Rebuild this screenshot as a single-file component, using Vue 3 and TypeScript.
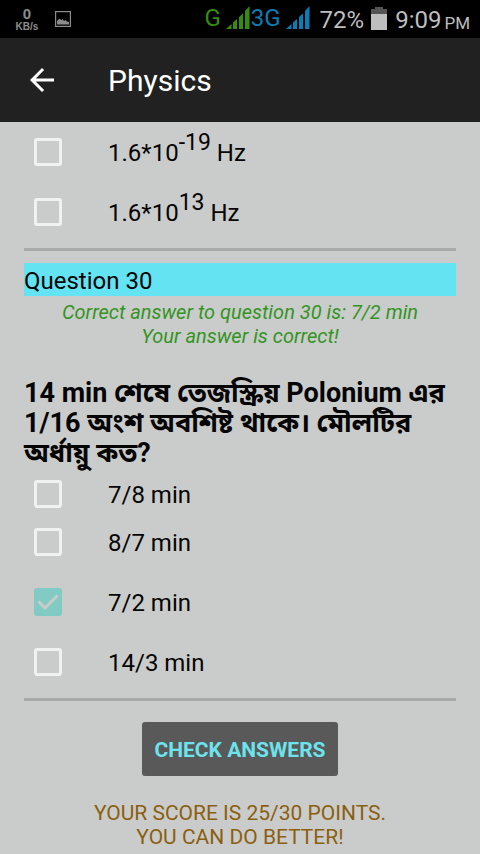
<script setup lang="ts">
import { ref } from 'vue'

interface Option {
  id: string
  text: string
  power?: string
  unit?: string
  checked: boolean
  tight?: boolean
}

const previousOptions = ref<Option[]>([
  { id: 'q29-c', text: '1.6*10', power: '-19', unit: ' Hz', checked: false },
  { id: 'q29-d', text: '1.6*10', power: '13', unit: ' Hz', checked: false },
])

const options = ref<Option[]>([
  { id: 'q30-a', text: '7/8 min', checked: false, tight: true },
  { id: 'q30-b', text: '8/7 min', checked: false },
  { id: 'q30-c', text: '7/2 min', checked: true },
  { id: 'q30-d', text: '14/3 min', checked: false },
])
</script>

<template>
  <div class="screen">
    <div class="status">
      <div class="speed"><span class="speed-value">0</span><span class="speed-unit">KB/s</span></div>
      <svg class="picture" width="16" height="16" viewBox="0 0 16 16">
        <rect x="0.6" y="0.6" width="14.8" height="14.8" fill="none" stroke="#8c8c8c" stroke-width="1.2" />
        <path d="M2 13.5V10l1.500-1.500 1-1 1 1 1 .500 1-1 1.500 2 1.500-1 1.500 1.500 2 .500v2.500z" fill="#8c8c8c" />
      </svg>
      <div class="system">
        <span class="net green">G</span>
        <svg class="bars green" width="24" height="23" viewBox="0 0 24 23" fill="currentColor">
          <path d="M0 23L5.500 18V23zM7 16.500l4-3.500V23H7zM13 11l4-3.500V23h-4zM19 5l4.500-5V23H19z" />
        </svg>
        <span class="net blue">3G</span>
        <svg class="bars blue" width="24" height="23" viewBox="0 0 24 23" fill="currentColor">
          <path d="M0 23L5.500 18V23zM7 16.500l4-3.500V23H7zM13 11l4-3.500V23h-4zM19 5l4.500-5V23H19z" />
        </svg>
        <span class="percent">72%</span>
        <svg class="battery" width="16" height="23" viewBox="0 0 16 23">
          <path d="M4 0h8v2h4v6H0V2h4z" fill="#555" />
          <path d="M0 7h16v16H0z" fill="#bebebe" />
        </svg>
        <span class="time">9:09</span>
        <span class="period">PM</span>
      </div>
    </div>

    <header class="bar">
      <button class="back" type="button" aria-label="Back">
        <svg width="36" height="36" viewBox="0 0 24 24" fill="#fff">
          <path d="M20 11H7.830l5.590-5.590L12 4l-8 8 8 8 1.410-1.410L7.830 13H20v-2z" />
        </svg>
      </button>
      <h1 class="title">Physics</h1>
    </header>

    <main class="content">
      <div class="options">
        <label v-for="o in previousOptions" :key="o.id" class="option" :for="o.id">
          <span class="check">
            <input :id="o.id" v-model="o.checked" type="checkbox" class="box" />
            <svg v-if="o.checked" class="tick" viewBox="0 0 28 28"><path d="M4.500 13.500l6.500 6.500L23.500 7.500" /></svg>
          </span>
          <span class="text">{{ o.text }}<sup>{{ o.power }}</sup>{{ o.unit }}</span>
        </label>
      </div>
      <hr class="rule" />

      <h2 class="heading">Question 30</h2>
      <p class="feedback">Correct answer to question 30 is: 7/2 min<br />Your answer is correct!</p>
      <p class="question">14 min শেষে তেজস্ক্রিয় Polonium এর 1/16 অংশ অবশিষ্ট থাকে। মৌলটির অর্ধায়ু কত?</p>

      <div class="answers">
        <label v-for="o in options" :key="o.id" class="option" :class="{ tight: o.tight }" :for="o.id">
          <span class="check">
            <input :id="o.id" v-model="o.checked" type="checkbox" class="box" />
            <svg v-if="o.checked" class="tick" viewBox="0 0 28 28"><path d="M4.500 13.500l6.500 6.500L23.500 7.500" /></svg>
          </span>
          <span class="text">{{ o.text }}</span>
        </label>
      </div>
      <hr class="rule" />

      <button class="submit" type="button">CHECK ANSWERS</button>
      <p class="score">YOUR SCORE IS 25/30 POINTS.<br />YOU CAN DO BETTER!</p>
    </main>
  </div>
</template>

<style>
body {
  background: #cacccb;
}
</style>

<style scoped>
.screen {
  font-family: Roboto, "Noto Sans", "Noto Sans Bengali", sans-serif;
  color: #050505;
  min-height: 100vh;
  background: #cacccb;
}
.status {
  display: flex;
  align-items: center;
  height: 38px;
  padding: 0 10px 0 15px;
  background: #000;
  color: #bebebe;
  white-space: nowrap;
}
.speed {
  display: flex;
  flex-direction: column;
  align-items: center;
  width: 24px;
  color: #8c8c8c;
  font-family: "Liberation Sans", sans-serif;
  font-weight: 700;
}
.speed-value {
  font-size: 15px;
  line-height: 15px;
}
.speed-unit {
  font-size: 10px;
  line-height: 12px;
}
.picture {
  margin-left: 16px;
}
.system {
  display: flex;
  align-items: center;
  margin-left: auto;
}
.net {
  padding-bottom: 2px;
  font-size: 24px;
  line-height: 34px;
}
.green {
  color: #368c0c;
}
.blue {
  color: #0c7cb4;
}
.bars {
  margin: 0 1px 3px 5px;
}
.percent,
.time {
  padding-top: 2px;
  font-size: 24px;
}
.percent {
  margin-left: 9px;
}
.battery {
  margin: 0 8px 2px 7px;
}
.period {
  margin: 7px 0 0 3px;
  font-size: 17px;
}
.bar {
  display: flex;
  align-items: center;
  height: 84px;
  padding: 0 24px;
  background: #212121;
}
.back {
  display: flex;
  width: 36px;
  padding: 0;
  border: 0;
  background: none;
}
.title {
  margin: 0 0 0 48px;
  color: #fff;
  font-size: 30px;
  font-weight: 400;
}
.content {
  padding: 6px 24px 5px;
}
.options,
.answers {
  display: flex;
  flex-direction: column;
}
.answers {
  margin-top: 2px;
}
.option {
  display: flex;
  align-items: center;
  height: 48px;
  margin-bottom: 12px;
  font-size: 24px;
}
.option.tight {
  margin-bottom: 0;
}
.check {
  display: grid;
  width: 28px;
  height: 28px;
  margin: 0 46px 0 10px;
}
.box {
  grid-area: 1 / 1;
  width: 28px;
  height: 28px;
  margin: 0;
  appearance: none;
  border: 3px solid #f0f2f1;
  border-radius: 3px;
}
.box:checked {
  border: 0;
  background: #82cbc4;
}
.tick {
  grid-area: 1 / 1;
  fill: none;
  stroke: #cacccb;
  stroke-width: 3;
  pointer-events: none;
}
.text {
  padding-top: 2px;
  white-space: pre;
  line-height: 28px;
}
.text sup {
  font-size: 23px;
  line-height: 0;
  vertical-align: 11px;
}
.rule {
  height: 3px;
  margin: 0;
  border: 0;
  background: #a8aaa9;
}
.heading {
  margin: 12px 0 0;
  padding-top: 3px;
  background: #64e3f2;
  font-size: 24px;
  font-weight: 400;
  line-height: 30px;
}
.feedback {
  margin: 4px 0 0;
  color: #349423;
  font-size: 20px;
  font-style: italic;
  line-height: 24px;
  text-align: center;
}
.question {
  margin: 30px 0 0;
  font-size: 27px;
  font-weight: 700;
  line-height: 30px;
}
.submit {
  display: block;
  height: 54px;
  margin: 21px auto 0;
  padding: 2px 12px 0;
  border: 0;
  border-radius: 3px;
  background: #595959;
  color: #6de3ec;
  font-family: Roboto, sans-serif;
  font-size: 21px;
  font-weight: 700;
}
.score {
  margin: 25px 0 0;
  color: #8a6010;
  font-size: 21px;
  line-height: 24px;
  text-align: center;
}
</style>
